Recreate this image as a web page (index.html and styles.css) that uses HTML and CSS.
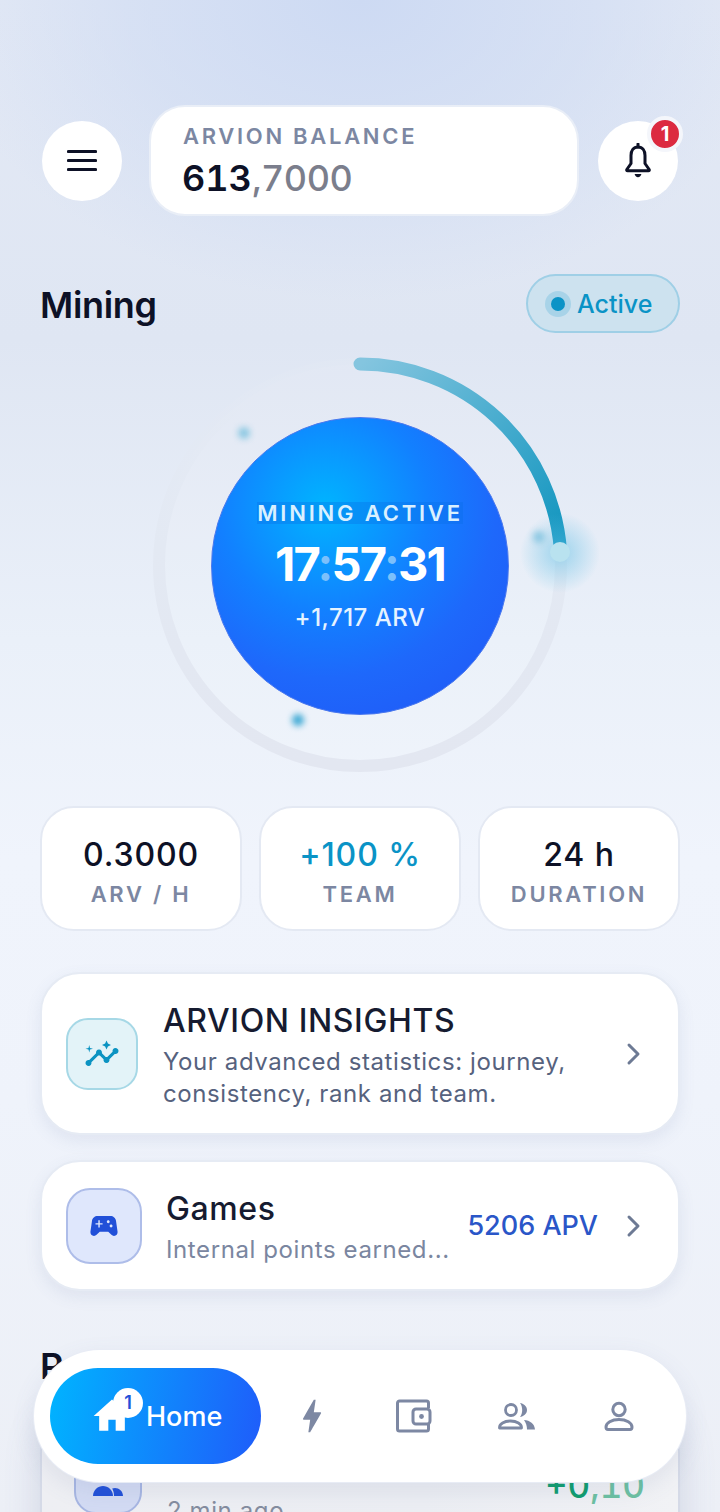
FILE: index.html
```html
<!DOCTYPE html>
<html lang="en">
<head>
  <meta charset="utf-8">
  <title>Arvion</title>
  <link rel="stylesheet" href="styles.css">
</head>
<body>
  <div class="page">
    <header class="header">
      <button class="round-btn">
        <svg width="30" height="24" viewBox="0 0 30 24"><path d="M1.500 2.500h27M1.500 11.500h27M1.500 20.500h27" fill="none" stroke="#0d1126" stroke-width="3.200" stroke-linecap="round"/></svg>
      </button>
      <div class="balance">
        <div class="balance-label">ARVION BALANCE</div>
        <div class="balance-value">613<span class="muted">,7000</span></div>
      </div>
      <button class="round-btn bell">
        <svg width="28" height="36" viewBox="0 0 28 36"><path d="M14 4c-4.600 0-7 3.600-7 8.500v8L2.800 26.500c-.4.700 0 1.300.8 1.300h20.800c.8 0 1.200-.6.8-1.300L21 20.500v-8C21 7.600 18.600 4 14 4z" fill="none" stroke="#0d1126" stroke-width="3" stroke-linejoin="round"/><path d="M14 1v3" stroke="#0d1126" stroke-width="3" stroke-linecap="round"/><path d="M10.600 31h6.800c-.4 2-1.700 3.200-3.400 3.200s-3-1.200-3.400-3.200z" fill="#0d1126"/></svg>
        <span class="bell-badge">1</span>
      </button>
    </header>

    <div class="section-head">
      <h2 class="section-title">Mining</h2>
      <div class="status-pill"><span class="status-dot"></span>Active</div>
    </div>

    <section class="hero">
      <svg class="ring" width="440" height="440" viewBox="0 0 440 440">
        <defs>
          <linearGradient id="arcGrad" gradientUnits="userSpaceOnUse" x1="220" y1="20" x2="420" y2="210">
            <stop offset="0" stop-color="#84c5df"/>
            <stop offset="1" stop-color="#0e94be"/>
          </linearGradient>
          <linearGradient id="trackGrad" gradientUnits="userSpaceOnUse" x1="220" y1="20" x2="220" y2="420">
            <stop offset="0" stop-color="#e3e9f4" stop-opacity="0.35"/>
            <stop offset="0.45" stop-color="#e3e9f3"/>
            <stop offset="1" stop-color="#e3e7f1"/>
          </linearGradient>
        </defs>
        <circle cx="220" cy="220" r="201" fill="rgba(255,255,255,0.08)" stroke="url(#trackGrad)" stroke-width="12"/>
        <path d="M220 19A201 201 0 0 1 420.500 206" fill="none" stroke="url(#arcGrad)" stroke-width="13" stroke-linecap="round"/>
      </svg>
      <span class="glow"></span>
      <span class="knob"></span>
      <span class="spark spark-a"></span>
      <span class="spark spark-b"></span>
      <span class="spark spark-c"></span>
      <div class="orb">
        <div class="orb-label">MINING ACTIVE</div>
        <div class="orb-time">17<span class="colon">:</span>57<span class="colon">:</span>31</div>
        <div class="orb-earned">+1,717 ARV</div>
      </div>
    </section>

    <section class="stats">
      <div class="stat">
        <div class="stat-value">0.3000</div>
        <div class="stat-label">ARV / H</div>
      </div>
      <div class="stat">
        <div class="stat-value cyan">+100 %</div>
        <div class="stat-label">TEAM</div>
      </div>
      <div class="stat">
        <div class="stat-value">24 h</div>
        <div class="stat-label">DURATION</div>
      </div>
    </section>

    <section class="card insights">
      <div class="icon-box">
        <svg width="36" height="36" viewBox="0 0 24 24" fill="#0b93c2"><path d="M21 8c-1.450 0-2.260 1.440-1.930 2.510l-3.550 3.560c-.3-.09-.74-.09-1.040 0l-2.550-2.550C12.270 10.450 11.460 9 10 9c-1.450 0-2.270 1.440-1.930 2.520l-4.560 4.550C2.440 15.740 1 16.550 1 18c0 1.100.9 2 2 2 1.450 0 2.260-1.440 1.930-2.510l4.550-4.560c.3.09.74.09 1.040 0l2.550 2.550C12.730 16.550 13.540 18 15 18c1.450 0 2.270-1.440 1.930-2.520l3.560-3.550c1.070.33 2.510-.48 2.510-1.930 0-1.100-.9-2-2-2z"/><path d="M15 9l.94-2.070L18 6l-2.060-.93L15 3l-.92 2.070L12 6l2.080.93zM3.500 11L4 9l2-.5L4 8l-.5-2L3 8l-2 .5L3 9z"/></svg>
      </div>
      <div class="card-body">
        <div class="card-title">ARVION INSIGHTS</div>
        <div class="card-text">Your advanced statistics: journey, consistency, rank and team.</div>
      </div>
      <svg class="chevron" width="16" height="24" viewBox="0 0 16 24"><path d="M3 3l9 9-9 9" fill="none" stroke="#6d7a94" stroke-width="3" stroke-linecap="round" stroke-linejoin="round"/></svg>
    </section>

    <section class="card games">
      <div class="icon-box">
        <svg width="34" height="34" viewBox="0 0 24 24" fill="#2150d8"><path d="M21.580 16.090l-1.090-7.660C20.210 6.460 18.520 5 16.530 5H7.470C5.480 5 3.790 6.460 3.510 8.430l-1.090 7.660C2.200 17.630 3.390 19 4.940 19c.68 0 1.320-.27 1.800-.75L9 16h6l2.250 2.250c.48.48 1.130.75 1.800.75 1.560 0 2.750-1.370 2.530-2.910zM11 11H9v2H8v-2H6v-1h2V8h1v2h2v1zm4-1c-.55 0-1-.45-1-1s.45-1 1-1 1 .45 1 1-.45 1-1 1zm2 3c-.55 0-1-.45-1-1s.45-1 1-1 1 .45 1 1-.45 1-1 1z"/></svg>
      </div>
      <div class="card-body">
        <div class="card-title">Games</div>
        <div class="card-sub">Internal points earned...</div>
      </div>
      <div class="card-amount">5206 APV</div>
      <svg class="chevron" width="16" height="24" viewBox="0 0 16 24"><path d="M3 3l9 9-9 9" fill="none" stroke="#6d7a94" stroke-width="3" stroke-linecap="round" stroke-linejoin="round"/></svg>
    </section>

    <h2 class="section-title recent-title">Recent</h2>
    <section class="card activity">
      <div class="icon-box">
        <svg width="30" height="30" viewBox="0 0 30 30" fill="#2150d8"><circle cx="11" cy="9" r="7"/><circle cx="23" cy="11" r="5"/><path d="M0 30c0-6 5-10 10-10s10 4 10 10z"/><path d="M21 30c0-3-.6-5-1.800-7.500.8-.3 1.800-.5 2.800-.5 4 0 8 3 8 8z"/></svg>
      </div>
      <div class="card-body">
        <div class="card-title">Team bonus</div>
        <div class="card-sub">2 min ago</div>
      </div>
      <div class="activity-amount">+0<span class="faded">,10</span></div>
    </section>

    <nav class="bottom-nav">
      <div class="nav-active">
        <span class="home-icon">
          <svg width="44" height="44" viewBox="0 0 24 24" fill="#fff"><path d="M10 20v-6h4v6h5v-8h3L12 3 2 12h3v8z"/></svg>
          <span class="home-badge">1</span>
        </span>
        Home
      </div>
      <div class="nav-item">
        <svg width="36" height="40" viewBox="4 1 16 22" fill="#7d88a3"><path d="M11 21h-1l1-7H7.500c-.58 0-.57-.32-.38-.66.19-.34.05-.08.07-.12C8.480 10.940 10.420 7.540 13 3h1l-1 7h3.500c.49 0 .56.33.47.51l-.07.15C12.960 17.550 11 21 11 21z"/></svg>
      </div>
      <div class="nav-item">
        <svg width="36" height="34" viewBox="0 0 36 34" fill="none" stroke="#7d88a3" stroke-width="3" stroke-linejoin="round"><path d="M32.500 9V4a2 2 0 0 0-2-2H3.500a2 2 0 0 0-2 2v26a2 2 0 0 0 2 2h27a2 2 0 0 0 2-2v-5"/><rect x="17" y="10" width="17" height="15" rx="3"/><circle cx="25.500" cy="17.500" r="2.400" fill="#7d88a3" stroke="none"/></svg>
      </div>
      <div class="nav-item">
        <svg width="40" height="36" viewBox="0 0 40 36"><circle cx="14" cy="12" r="5.500" fill="none" stroke="#7d88a3" stroke-width="2.800"/><path d="M2.500 29.500c0-3.500 4.500-6.500 11-6.500s11 3 11 6.500v.5h-22z" fill="none" stroke="#7d88a3" stroke-width="2.800" stroke-linejoin="round"/><path d="M23 5c3.500.5 7 3 7 7s-3.500 6.500-7 7c1.500-2 2.200-4.500 2.200-7s-.7-5-2.200-7z" fill="#7d88a3"/><path d="M27 22c6 .5 10.500 3.500 11 9.500h-8c0-3.500-1-6.500-3-9.500z" fill="#7d88a3"/></svg>
      </div>
      <div class="nav-item">
        <svg width="36" height="36" viewBox="0 0 36 36" fill="none" stroke="#7d88a3" stroke-width="3" stroke-linejoin="round"><circle cx="18" cy="11.500" r="6.200"/><path d="M5 29c0-4 5.500-7.500 13-7.500S31 25 31 29c0 1.500-.8 2.500-2 2.500H7c-1.200 0-2-1-2-2.500z"/></svg>
      </div>
    </nav>
  </div>
</body>
</html>
```

FILE: styles.css
```css
* {
  box-sizing: border-box;
}
html, body {
  margin: 0;
  height: 1512px;
  overflow: hidden;
}
body {
  font-family: "Inter", "Liberation Sans", sans-serif;
  color: #0d1126;
  background-color: #f3f6fc;
}
.page {
  position: relative;
  height: 1512px;
  overflow: hidden;
  padding: 105px 40px 0;
  background:
    radial-gradient(ellipse 420px 300px at 50% 0, #cddaf3 0%, rgba(205, 218, 243, 0.55) 55%, rgba(205, 218, 243, 0) 100%),
    linear-gradient(180deg, #e3e9f5 0, #dfe6f3 340px, #eaf0f9 640px, #f0f4fc 860px, #eff3fb 1100px, #eceff6 1512px);
}
button {
  border: none;
  padding: 0;
  background: none;
  font: inherit;
}
.header {
  display: flex;
  align-items: center;
  margin: 0 2px;
}
.round-btn {
  position: relative;
  flex: none;
  width: 80px;
  height: 80px;
  border-radius: 50%;
  background: #fff;
  display: flex;
  align-items: center;
  justify-content: center;
}
.bell {
  margin-left: 19px;
}
.bell-badge {
  position: absolute;
  top: -5px;
  right: -5px;
  width: 36px;
  height: 36px;
  border-radius: 50%;
  background: #dc2a40;
  border: 4px solid #f4f6fb;
  color: #fff;
  font-size: 20px;
  font-weight: 700;
  line-height: 28px;
  text-align: center;
}
.balance {
  flex: none;
  width: 430px;
  height: 111px;
  margin-left: 27px;
  padding: 16px 32px 0;
  border-radius: 36px;
  background: #fff;
  border: 2px solid #e9eef7;
}
.balance-label {
  font-size: 22px;
  font-weight: 600;
  letter-spacing: 2.7px;
  line-height: 26px;
  color: #7c87a2;
}
.balance-value {
  font-size: 36px;
  font-weight: 600;
  line-height: 44px;
  margin-top: 7px;
  margin-left: -1px;
  font-variant-numeric: tabular-nums;
}
.muted {
  color: #7b7e8c;
  font-weight: 500;
  letter-spacing: -0.5px;
}
.section-head {
  display: flex;
  justify-content: space-between;
  align-items: center;
  margin-top: 58px;
  height: 59px;
}
.section-head .section-title {
  margin-top: 2px;
}
.section-title {
  margin: 0;
  font-size: 36px;
  font-weight: 600;
  line-height: 44px;
  letter-spacing: -0.3px;
}
.status-pill {
  display: flex;
  align-items: center;
  width: 154px;
  height: 59px;
  padding-left: 23px;
  border-radius: 30px;
  background: #cde2ef;
  border: 2px solid #9fcfe6;
  color: #0a93c6;
  font-size: 25px;
  font-weight: 500;
}
.status-dot {
  width: 14px;
  height: 14px;
  margin-right: 12px;
  border-radius: 50%;
  background: #0a93c6;
  box-shadow: 0 0 0 6px #a8d3e8;
}
.hero {
  position: relative;
  height: 414px;
  margin-top: 25px;
  display: flex;
  align-items: center;
  justify-content: center;
}
.ring {
  position: absolute;
  left: 100px;
  top: -13px;
}
.glow {
  position: absolute;
  left: 480px;
  top: 155px;
  width: 80px;
  height: 80px;
  border-radius: 50%;
  background: radial-gradient(circle closest-side, rgba(95, 190, 228, 0.55) 0%, rgba(95, 190, 228, 0.28) 50%, rgba(95, 190, 228, 0) 100%);
}
.knob {
  position: absolute;
  left: 510px;
  top: 184px;
  width: 20px;
  height: 20px;
  border-radius: 50%;
  background: #b9e2ef;
}
.spark {
  position: absolute;
  width: 12px;
  height: 12px;
  border-radius: 50%;
  background: #8cc8e2;
  filter: blur(3px);
}
.spark-a {
  left: 198px;
  top: 69px;
}
.spark-b {
  left: 493px;
  top: 173px;
}
.spark-c {
  left: 252px;
  top: 356px;
  background: #3ea9d4;
}
.orb {
  position: relative;
  width: 298px;
  height: 298px;
  margin-top: 2px;
  border-radius: 50%;
  background: radial-gradient(circle at 38% 30%, #00b4ff 0%, #1280ff 38%, #1e68fb 62%, #2154f5 100%);
  border: 1px solid #4a78ee;
  color: #fff;
  display: flex;
  flex-direction: column;
  align-items: center;
  padding-top: 84px;
}
.orb-label {
  font-size: 22px;
  font-weight: 600;
  letter-spacing: 2.8px;
  line-height: 22px;
  color: #d9f0ff;
  background: rgba(10, 110, 230, 0.35);
  white-space: nowrap;
}
.orb-time {
  font-size: 47px;
  font-weight: 700;
  line-height: 58px;
  margin-top: 11px;
  letter-spacing: -1.7px;
}
.colon {
  color: #7cc0fb;
}
.orb-earned {
  font-size: 24px;
  font-weight: 500;
  line-height: 30px;
  margin-top: 10px;
  color: #e6f3ff;
  letter-spacing: 0.5px;
}
.stats {
  display: flex;
  gap: 17px;
  margin-top: 34px;
}
.stat {
  flex: 1;
  height: 125px;
  border-radius: 34px;
  background: #fff;
  border: 2px solid #e4e9f3;
  text-align: center;
  padding-top: 27px;
}
.stat-value {
  font-size: 32px;
  font-weight: 500;
  line-height: 40px;
  letter-spacing: 0.9px;
}
.cyan {
  color: #0a93c6;
}
.stat-label {
  font-size: 22px;
  font-weight: 600;
  line-height: 28px;
  margin-top: 5px;
  letter-spacing: 2.7px;
  color: #7c87a2;
}
.card {
  display: flex;
  align-items: center;
  background: #fff;
  border: 2px solid #e6ebf4;
  border-radius: 40px;
  box-shadow: 0 6px 16px rgba(90, 110, 160, 0.1);
}
.insights {
  height: 163px;
  margin-top: 41px;
  padding: 0 36px 0 24px;
}
.games {
  height: 131px;
  margin-top: 25px;
  padding: 0 36px 0 24px;
}
.icon-box {
  flex: none;
  display: flex;
  align-items: center;
  justify-content: center;
}
.insights .icon-box {
  width: 72px;
  height: 72px;
  border-radius: 22px;
  background: #e3f3f8;
  border: 2px solid #a6d8e6;
}
.games .icon-box {
  width: 76px;
  height: 76px;
  border-radius: 24px;
  background: #dfe7fc;
  border: 2px solid #aebde9;
}
.card-body {
  flex: 1;
  min-width: 0;
}
.insights .card-body {
  margin-left: 25px;
  padding-top: 3px;
}
.games .card-body {
  margin-left: 24px;
}
.card-title {
  font-size: 32px;
  font-weight: 500;
  line-height: 40px;
  color: #161b30;
  letter-spacing: 0.6px;
}
.games .card-title {
  margin-top: 4px;
}
.card-text {
  font-size: 24px;
  line-height: 32px;
  margin-top: 5px;
  color: #56627e;
  letter-spacing: 0.6px;
}
.card-sub {
  font-size: 24px;
  line-height: 32px;
  margin-top: 5px;
  color: #7a86a0;
  letter-spacing: 0.6px;
}
.card-amount {
  font-size: 27px;
  font-weight: 500;
  color: #2a56c8;
  margin-right: 28px;
}
.chevron {
  flex: none;
}
.recent-title {
  margin-top: 53px;
}
.activity {
  height: 170px;
  margin-top: 23px;
  padding: 0 33px 0 32px;
  align-items: flex-start;
  background: linear-gradient(90deg, #eeeff3 0%, #eceef3 60%, #f1f2f5 100%);
  border-color: #d5dae7;
  box-shadow: 0 0 36px rgba(95, 110, 155, 0.2);
}
.activity .icon-box {
  width: 68px;
  height: 68px;
  margin-top: 33px;
  border-radius: 22px;
  background: #d3dbf3;
  border: 2px solid #a7b6e2;
  align-items: flex-start;
  padding-top: 18px;
}
.activity .card-body {
  margin-left: 25px;
  padding-top: 25px;
}
.activity .card-sub {
  margin-top: 17px;
  color: #858d9f;
}
.activity-amount {
  font-size: 35px;
  font-weight: 500;
  color: #0f9d6e;
  margin-top: 51px;
  font-variant-numeric: tabular-nums;
}
.faded {
  color: #6cc0a2;
}
.bottom-nav {
  position: absolute;
  left: 34px;
  top: 1350px;
  width: 652px;
  height: 132px;
  padding: 0 16px;
  display: flex;
  align-items: center;
  border-radius: 66px;
  background: #fff;
  box-shadow: 0 0 0 1px #e8ecf5, 0 8px 24px rgba(90, 110, 160, 0.12);
}
.nav-active {
  flex: none;
  width: 211px;
  height: 96px;
  padding-left: 40px;
  border-radius: 48px;
  background: linear-gradient(100deg, #00b4ff 0%, #1f5cfa 100%);
  color: #fff;
  font-size: 27px;
  font-weight: 500;
  display: flex;
  align-items: center;
  gap: 12px;
}
.home-icon {
  position: relative;
  display: block;
  width: 44px;
  height: 44px;
}
.home-badge {
  position: absolute;
  left: 23px;
  top: -6px;
  width: 30px;
  height: 30px;
  border-radius: 50%;
  background: #fff;
  color: #2150d8;
  font-size: 18px;
  font-weight: 600;
  line-height: 30px;
  text-align: center;
}
.nav-item {
  flex: 1;
  display: flex;
  align-items: center;
  justify-content: center;
}
```
